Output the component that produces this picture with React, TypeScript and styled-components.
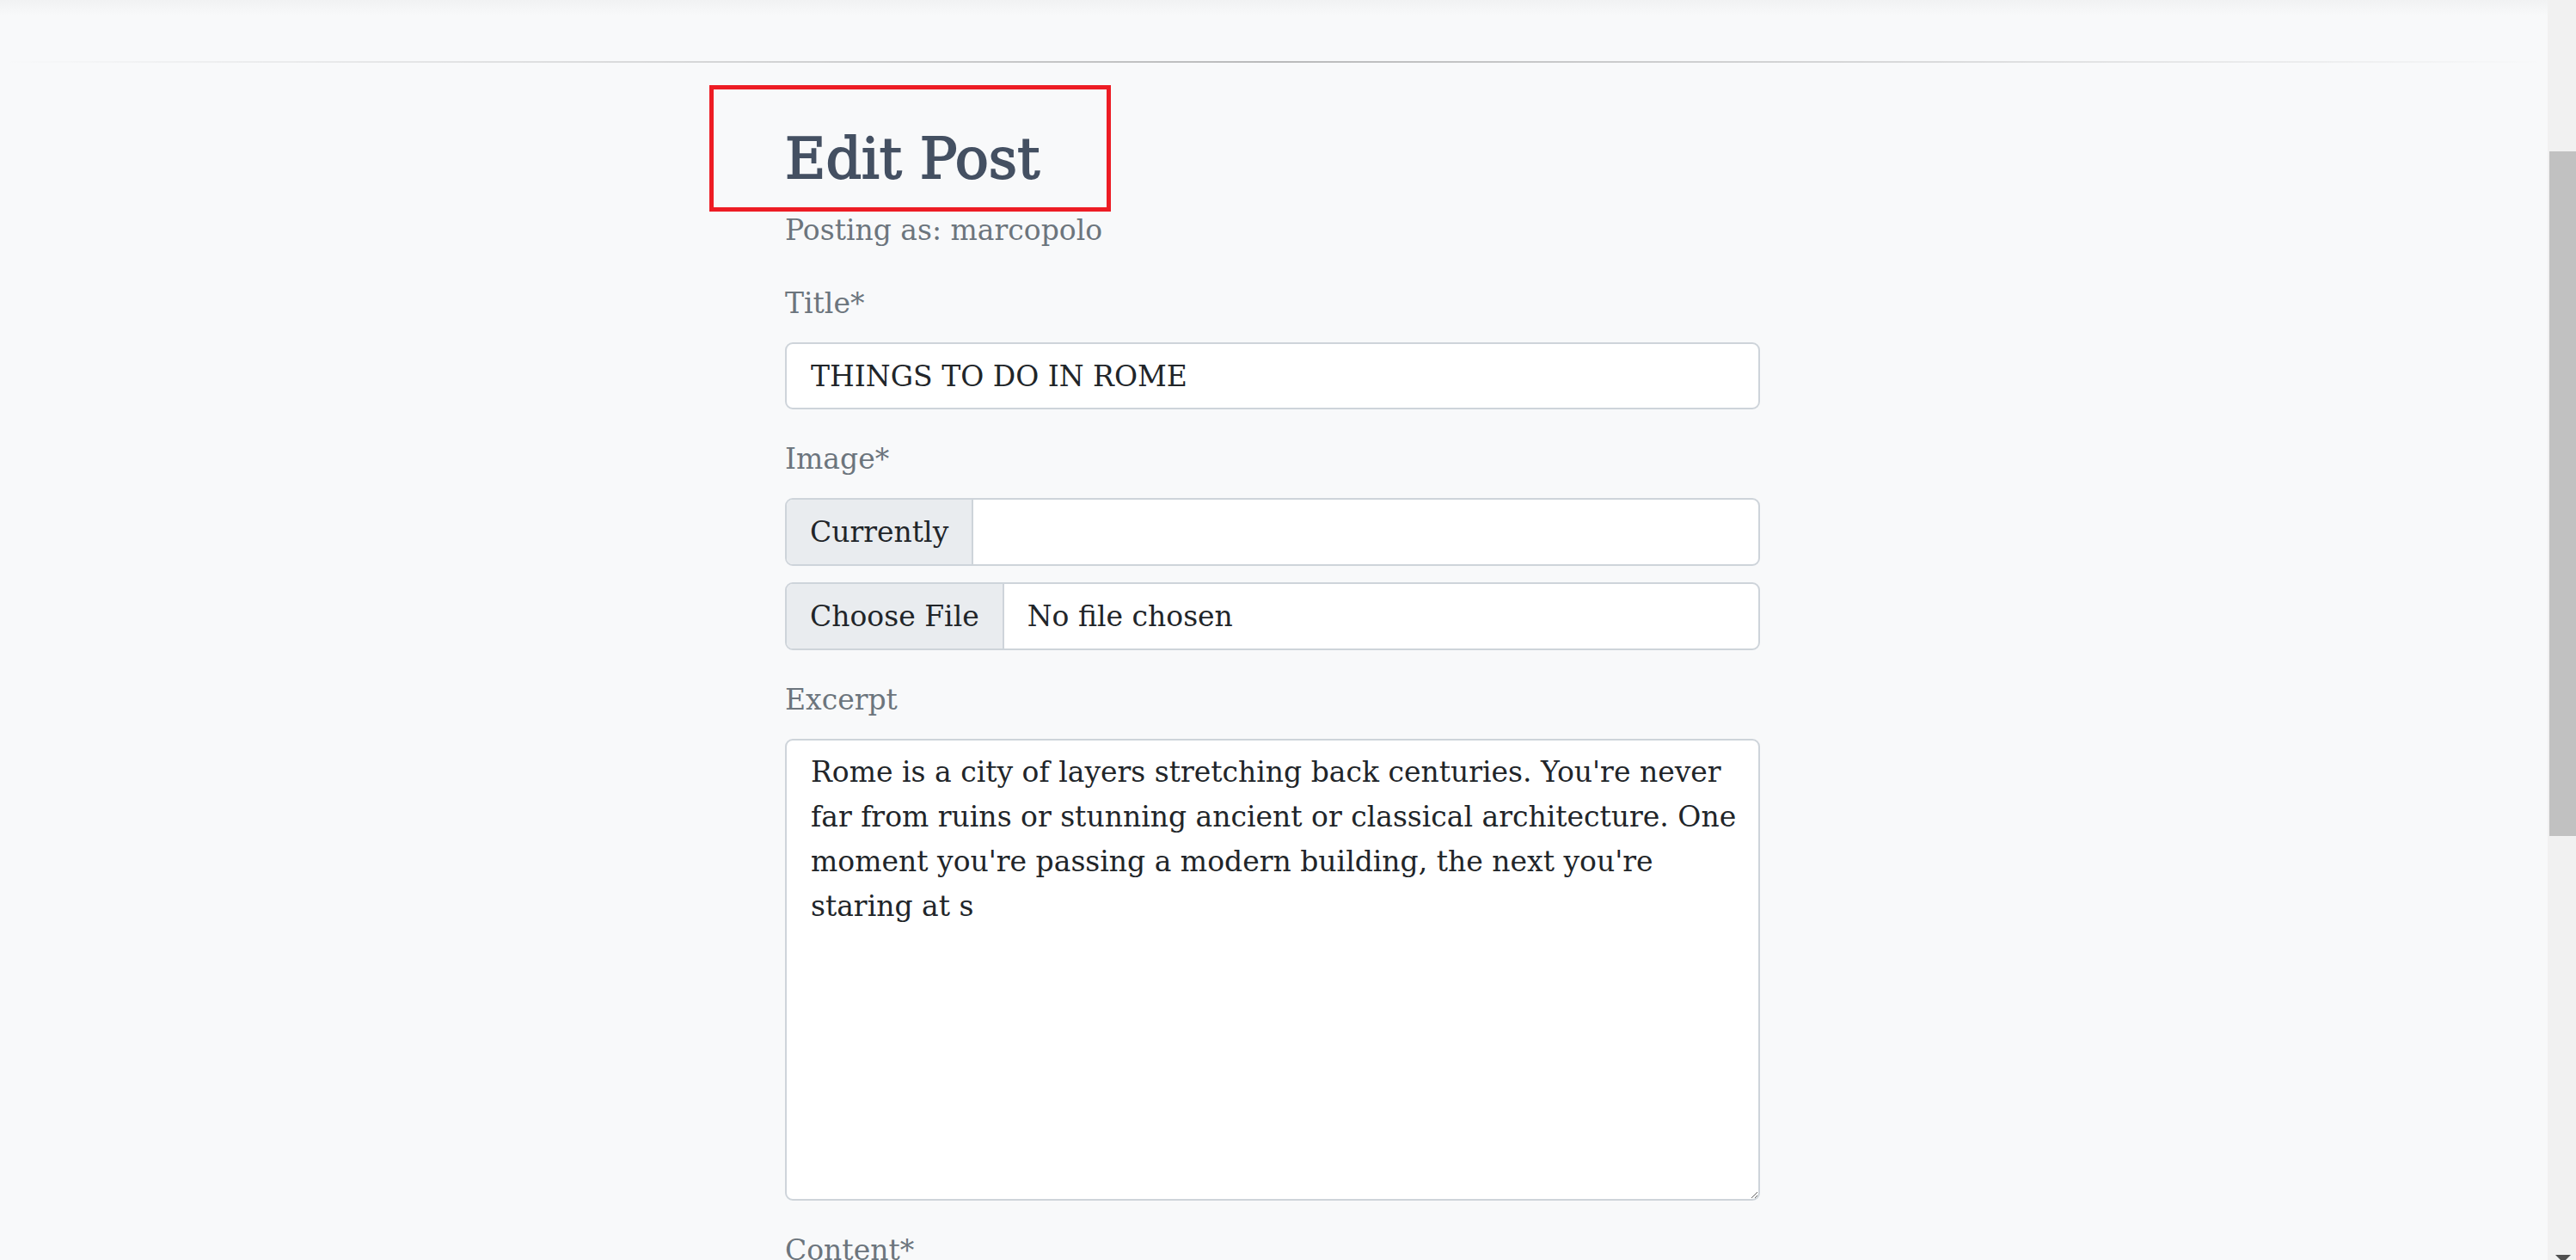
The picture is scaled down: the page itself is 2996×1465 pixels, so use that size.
import React from "react";
import styled, { createGlobalStyle } from "styled-components";

const GlobalStyle = createGlobalStyle`
  html, body {
    margin: 0;
    padding: 0;
    height: 100%;
    overflow: hidden;
    background: #f8f9fa;
  }
  #root {
    height: 100%;
  }
  * {
    box-sizing: border-box;
  }
`;

const Screen = styled.div`
  display: flex;
  height: 100vh;
  font-family: "DejaVu Serif", serif;
`;

const Page = styled.div`
  flex: 1;
  min-width: 0;
  display: flex;
  flex-direction: column;
  background: #f8f9fa;
  overflow: hidden;
`;

const TopShade = styled.div`
  height: 71px;
  flex: none;
  background: linear-gradient(to bottom, #f1f2f3 0px, #f8f9fa 18px, #f8f9fa 100%);
`;

const Divider = styled.div`
  height: 2px;
  flex: none;
  background: linear-gradient(
    to right,
    rgba(0, 0, 0, 0),
    rgba(0, 0, 0, 0.25),
    rgba(0, 0, 0, 0)
  );
`;

const Content = styled.div`
  display: flex;
  justify-content: center;
  padding-right: 3px;
`;

const Main = styled.main`
  width: 1134px;
  padding-top: 72px;
  display: flex;
  flex-direction: column;
`;

const Heading = styled.h1`
  position: relative;
  margin: 0 0 17px 0;
  font-size: 65px;
  line-height: 80px;
  font-weight: 400;
  color: #445062;
  -webkit-text-stroke: 1.8px #445062;
`;

const AnnotationFrame = styled.span`
  position: absolute;
  left: -88px;
  top: -46px;
  width: 467px;
  height: 147px;
  border: 5px solid #ed1c24;
  pointer-events: none;
`;

const Muted = styled.p`
  margin: 0 0 33px 0;
  font-size: 33px;
  line-height: 52px;
  color: #6c757d;
`;

const Field = styled.div<{ $gap?: number }>`
  display: flex;
  flex-direction: column;
  gap: ${(p) => p.$gap ?? 0}px;
  margin-bottom: 32px;
`;

const Label = styled.label<{ $flush?: boolean }>`
  display: block;
  margin-bottom: ${(p) => (p.$flush ? 0 : 19)}px;
  font-size: 33px;
  line-height: 52px;
  color: #6c757d;
`;

const TextInput = styled.input`
  display: block;
  width: 100%;
  height: 78px;
  padding: 0 28px;
  border: 2px solid #ced4da;
  border-radius: 9px;
  background: #ffffff;
  font-family: "DejaVu Serif", serif;
  font-size: 33px;
  color: #212529;
  outline: none;
`;

const InputGroup = styled.div`
  display: flex;
  height: 79px;
  border: 2px solid #ced4da;
  border-radius: 9px;
  background: #ffffff;
  overflow: hidden;
`;

const Addon = styled.span`
  display: flex;
  align-items: center;
  padding: 0 27px;
  background: #e9ecef;
  border-right: 2px solid #ced4da;
  font-size: 33px;
  color: #212529;
  white-space: nowrap;
`;

const GroupBody = styled.span`
  flex: 1;
  display: flex;
  align-items: center;
  padding: 0 27px;
  font-size: 33px;
  color: #212529;
  white-space: nowrap;
`;

const TextArea = styled.textarea`
  display: block;
  width: 100%;
  height: 537px;
  padding: 11px 12px 11px 28px;
  border: 2px solid #ced4da;
  border-radius: 9px;
  background: #ffffff;
  font-family: "DejaVu Serif", serif;
  font-size: 33px;
  line-height: 52px;
  color: #212529;
  outline: none;
  resize: vertical;
`;

const Scrollbar = styled.div`
  width: 33px;
  flex: none;
  display: flex;
  flex-direction: column;
  background: #f1f1f1;
  overflow: hidden;
`;

const Thumb = styled.div`
  margin-top: 176px;
  margin-left: 2px;
  height: 796px;
  background: #c1c1c1;
  flex: none;
`;

const TrackRest = styled.div`
  flex: 1;
`;

const ArrowSlot = styled.div`
  height: 6px;
  flex: none;
  display: flex;
  justify-content: center;
  padding-left: 3px;
  overflow: hidden;
`;

const excerpt =
  "Rome is a city of layers stretching back centuries. You're never far from ruins or stunning ancient or classical architecture. One moment you're passing a modern building, the next you're staring at s";

export default function App() {
  return (
    <>
      <GlobalStyle />
      <Screen>
        <Page>
          <TopShade />
          <Divider />
          <Content>
            <Main>
              <Heading>
                Edit Post
                <AnnotationFrame />
              </Heading>
              <Muted>Posting as: marcopolo</Muted>
              <Field>
                <Label htmlFor="title">Title*</Label>
                <TextInput id="title" defaultValue="THINGS TO DO IN ROME" />
              </Field>
              <Field $gap={19}>
                <Label $flush>Image*</Label>
                <InputGroup>
                  <Addon>Currently</Addon>
                  <GroupBody />
                </InputGroup>
                <InputGroup>
                  <Addon>Choose File</Addon>
                  <GroupBody>No file chosen</GroupBody>
                </InputGroup>
              </Field>
              <Field>
                <Label htmlFor="excerpt">Excerpt</Label>
                <TextArea id="excerpt" defaultValue={excerpt} />
              </Field>
              <Field>
                <Label htmlFor="content">Content*</Label>
              </Field>
            </Main>
          </Content>
        </Page>
        <Scrollbar>
          <Thumb />
          <TrackRest />
          <ArrowSlot>
            <svg width="18" height="9" viewBox="0 0 18 9">
              <path d="M0 0 L18 0 L9 9 Z" fill="#505050" />
            </svg>
          </ArrowSlot>
        </Scrollbar>
      </Screen>
    </>
  );
}
